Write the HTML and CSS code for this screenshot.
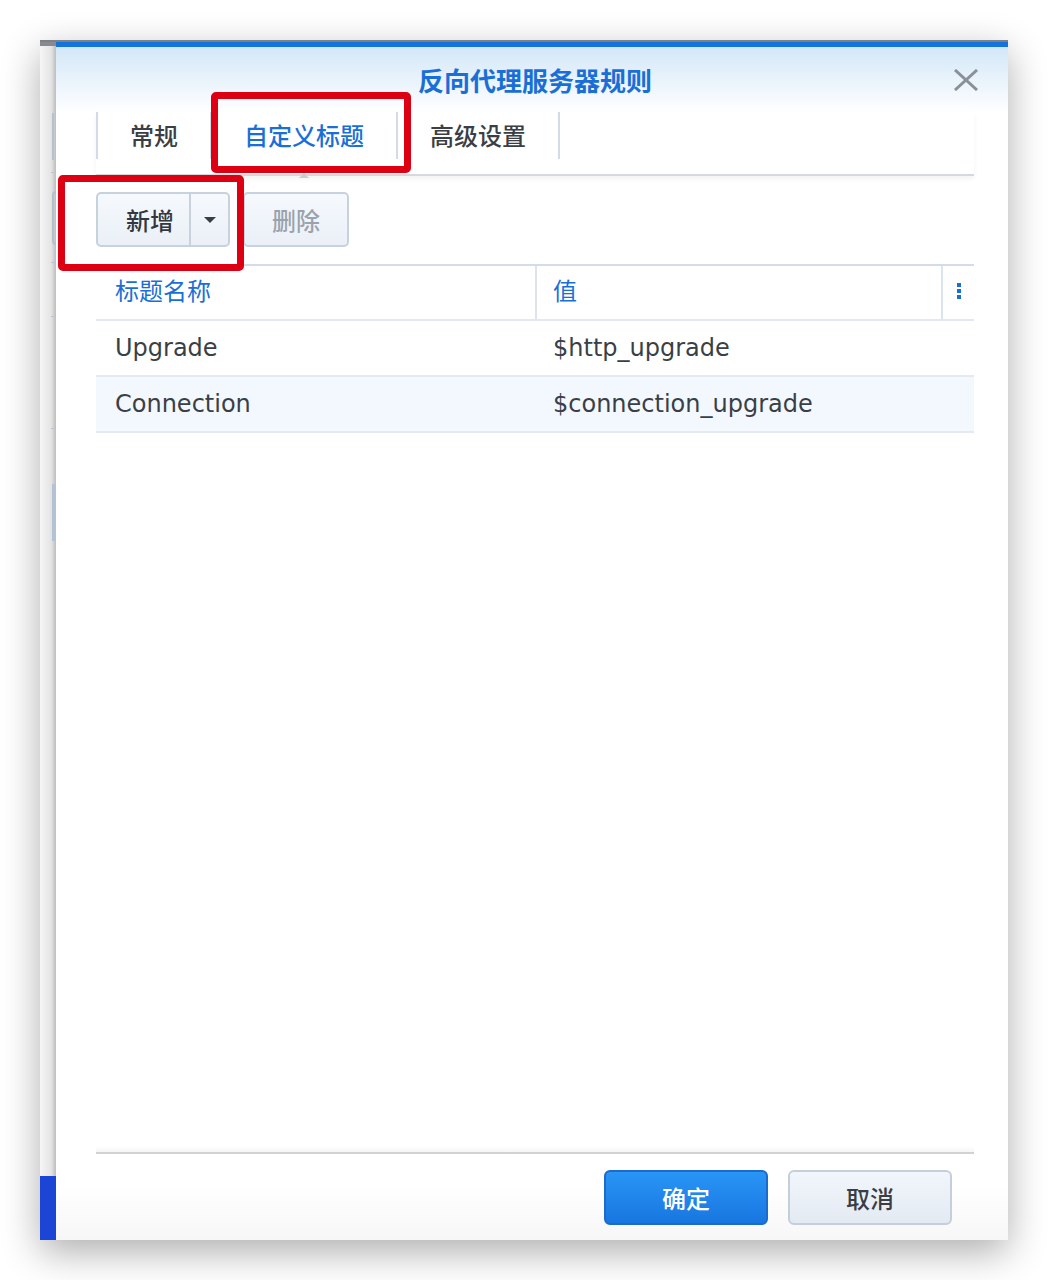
FILE: index.html
```html
<!DOCTYPE html>
<html lang="zh-CN">
<head>
  <meta charset="UTF-8" />
  <meta name="viewport" content="width=device-width, initial-scale=1.0"/>
  <title>反向代理服务器规则</title>
  <link rel="stylesheet" href="styles.css">
</head>
<body>

<div class="stage">
  <div class="window">

    <!-- the window behind the dialog, only a thin slice shows -->
    <div class="behind">
      <div class="bk-tab"></div>
      <div class="bk-rule bk-r1"></div>
      <div class="bk-btn"></div>
      <div class="bk-rule bk-r2"></div>
      <div class="bk-rule bk-r3"></div>
      <div class="bk-rule bk-r4"></div>
      <div class="bk-sel"></div>
      <div class="bk-bar"></div>
    </div>

    <div class="dialog">
      <div class="dlg-head">
        <h1 class="dlg-title">反向代理服务器规则</h1>
        <button class="dlg-close" aria-label="关闭">
          <svg width="26" height="22" viewBox="0 0 26 22">
            <path d="M2 1 L24 21 M24 1 L2 21" stroke="#8a9098" stroke-width="3" fill="none"/>
          </svg>
        </button>
        <ul class="tabs">
          <li class="tab">常规</li>
          <li class="tab active">自定义标题</li>
          <li class="tab">高级设置</li>
        </ul>
      </div>

      <div class="dlg-body">
        <div class="toolbar">
          <div class="btn-split">
            <button class="btn-main">新增</button>
            <button class="btn-arrow"><span class="caret"></span></button>
          </div>
          <button class="btn btn-disabled">删除</button>
        </div>

        <table class="grid">
          <thead>
            <tr>
              <th class="col-name">标题名称</th>
              <th class="col-value">值</th>
              <th class="col-menu"><span class="kebab"><i></i><i></i><i></i></span></th>
            </tr>
          </thead>
          <tbody>
            <tr>
              <td class="col-name">Upgrade</td>
              <td class="col-value" colspan="2">$http_upgrade</td>
            </tr>
            <tr class="alt">
              <td class="col-name">Connection</td>
              <td class="col-value" colspan="2">$connection_upgrade</td>
            </tr>
          </tbody>
        </table>
      </div>

      <div class="dlg-foot">
        <button class="btn-foot btn-primary">确定</button>
        <button class="btn-foot">取消</button>
      </div>
    </div>

    <!-- annotation boxes -->
    <div class="mark mark-tab"></div>
    <div class="mark mark-add"></div>
  </div>
</div>

</body>
</html>
```

FILE: styles.css
```css
body {
  margin: 0;
  background: #fff;
  font-family: "Noto Sans CJK SC", sans-serif;
  overflow: hidden;
}

.stage {
  padding: 40px;
  height: 1200px;
}

.window {
  position: relative;
  display: flex;
  width: 968px;
  height: 1198px;
  border-top: 2px solid #7c8087;
  box-shadow: 0 12px 36px rgba(0, 0, 0, 0.32);
}

/* slice of the window behind */
.behind {
  display: flex;
  flex-direction: column;
  width: 16px;
  border-top: 4px solid #878b91;
  background: linear-gradient(to right, #f6f6f6, #e4e4e4 70%, #bdbdbd);
}

.bk-tab {
  margin: 67px 0 0 12px;
  width: 2px;
  height: 47px;
  background: #b6c1ce;
}

.bk-rule {
  margin-left: 11px;
  width: 5px;
  height: 1px;
  background: #bcc5cf;
}

.bk-r1 { margin-top: 12px; }
.bk-r2 { margin-top: 17px; }
.bk-r3 { margin-top: 53px; }
.bk-r4 { margin-top: 111px; }

.bk-btn {
  box-sizing: border-box;
  margin: 18px 0 0 12px;
  width: 4px;
  height: 54px;
  border: 2px solid #b5bfca;
  border-right: none;
  border-radius: 5px 0 0 5px;
}

.bk-sel {
  margin: 55px 0 0 12px;
  width: 4px;
  height: 57px;
  background: #b4c3d3;
}

.bk-bar {
  margin-top: auto;
  height: 64px;
  background: #1d45d5;
}

/* dialog */
.dialog {
  flex: 1;
  display: flex;
  flex-direction: column;
  border-top: 5px solid #1473dc;
  background: linear-gradient(to bottom, #fff calc(100% - 56px), #f7f7f7);
}

.dlg-head {
  position: relative;
  padding-top: 17px;
  background: linear-gradient(to bottom, #d3e7f8, #fff 66px);
}

.dlg-title {
  margin: 0;
  padding-left: 6px;
  text-align: center;
  font-size: 26px;
  line-height: 32px;
  font-weight: 700;
  color: #1a6fd6;
}

.dlg-close {
  position: absolute;
  top: 22px;
  right: 29px;
  padding: 0;
  border: none;
  background: none;
  line-height: 0;
}

.tabs {
  display: flex;
  list-style: none;
  margin: 16px 34px 0 40px;
  padding: 0 0 15px;
  border-bottom: 2px solid #d5d8dc;
  box-shadow: 0 3px 5px rgba(0, 0, 0, 0.05);
}

.tab {
  position: relative;
  padding: 0 32px;
  height: 47px;
  line-height: 46px;
  font-size: 24px;
  font-weight: 500;
  color: #3b3f45;
  border-left: 2px solid #d3dbe6;
}

.tab:last-child {
  border-right: 2px solid #d3dbe6;
}

.tab.active {
  color: #1a6fd6;
}

.tab.active::after {
  content: "";
  position: absolute;
  left: 50%;
  bottom: -19px;
  margin-left: -5px;
  border: 5px solid transparent;
  border-bottom-color: #c9cdd2;
  border-top: none;
}

/* body */
.dlg-body {
  flex: 1;
  padding: 16px 34px 0 40px;
}

.toolbar {
  display: flex;
  gap: 13px;
}

.btn-split,
.btn {
  box-sizing: border-box;
  height: 55px;
  border: 2px solid #c8d2dd;
  border-radius: 5px;
  background: linear-gradient(to bottom, #f6f9fd, #eaf0f7);
}

.btn-split {
  display: flex;
  width: 134px;
}

.btn-split button {
  border: none;
  background: none;
  padding: 0;
  font-family: "Noto Sans CJK SC", sans-serif;
}

.btn-main {
  width: 93px;
  padding-left: 28px !important;
  text-align: left;
  font-size: 24px;
  font-weight: 500;
  color: #333840;
  border-right: 2px solid #c8d2dd !important;
}

.btn-arrow {
  flex: 1;
  display: flex;
  align-items: center;
  justify-content: center;
}

.caret {
  border: 6px solid transparent;
  border-top: 6px solid #3a3e44;
  border-bottom: none;
}

.btn {
  width: 106px;
  font-size: 24px;
  font-weight: 500;
  font-family: "Noto Sans CJK SC", sans-serif;
}

.btn-disabled {
  color: #9aa3ad;
}

/* grid */
.grid {
  width: 100%;
  margin-top: 17px;
  border-collapse: collapse;
  font-size: 24px;
}

.grid th {
  height: 46px;
  padding: 0 0 7px;
  text-align: left;
  font-weight: 400;
  color: #1a6fd6;
  border-top: 2px solid #d3dce8;
  border-bottom: 2px solid #e1e8f1;
}

.grid td {
  height: 54px;
  padding: 0;
  color: #3a3f46;
  border-bottom: 2px solid #e4eaf2;
  font-family: "DejaVu Sans", "Noto Sans CJK SC", sans-serif;
}

.grid .col-name {
  width: 420px;
  padding-left: 19px;
}

.grid .col-value {
  padding-left: 16px;
  border-left: 2px solid #dbe3ed;
}

.grid td.col-value {
  border-left: none;
  padding-left: 17px;
}

.grid .col-menu {
  width: 31px;
  padding: 0;
  border-left: 2px solid #dbe3ed;
}

.kebab {
  display: flex;
  flex-direction: column;
  align-items: center;
  gap: 2px;
  margin-top: -4px;
}

.kebab i {
  width: 4px;
  height: 4px;
  background: #1a6fd6;
}

.grid tr.alt td {
  background: #f3f8fe;
}

/* footer */
.dlg-foot {
  position: relative;
  display: flex;
  justify-content: flex-end;
  gap: 20px;
  margin: 0 34px 0 40px;
  padding: 16px 22px 15px 0;
  border-top: 2px solid #d2d2d2;
}

.dlg-foot::before {
  content: "";
  position: absolute;
  left: 0;
  right: 0;
  top: -8px;
  height: 6px;
  background: linear-gradient(to bottom, rgba(0, 0, 0, 0), rgba(0, 0, 0, 0.04));
}

.btn-foot {
  box-sizing: border-box;
  width: 164px;
  height: 55px;
  font-size: 24px;
  font-weight: 500;
  color: #3a3e44;
  border: 2px solid #c5ced9;
  border-radius: 6px;
  background: linear-gradient(to bottom, #f1f6fc, #e4eaf2);
  font-family: "Noto Sans CJK SC", sans-serif;
}

.btn-primary {
  color: #fff;
  border-color: #1a6bcc;
  background: linear-gradient(to bottom, #2995f6, #1876e0);
}

/* red annotation boxes */
.mark {
  position: absolute;
  box-sizing: border-box;
  border: 7px solid #dc0012;
  border-radius: 5px;
}

.mark-tab {
  left: 171px;
  top: 50px;
  width: 200px;
  height: 81px;
}

.mark-add {
  left: 18px;
  top: 133px;
  width: 186px;
  height: 96px;
}
```
